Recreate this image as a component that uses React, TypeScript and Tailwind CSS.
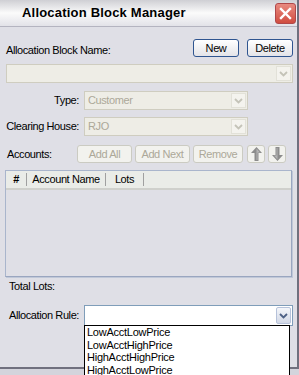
import React from "react"

const Chevron = ({ color }: { color: string }) => (
  <svg width="9" height="6" viewBox="0 0 9 6">
    <path d="M1 1l3.5 3.5L8 1" fill="none" stroke={color} strokeWidth="1.8" />
  </svg>
)

const DisabledCombo = ({ text, className }: { text?: string; className: string }) => (
  <div className={`flex h-[19px] border border-[#cfcdc0] bg-[#eeede6] ${className}`}>
    <div className="flex-1 pl-[3px] leading-[17px] text-[#aca899]">{text}</div>
    <div className="m-[1px] flex w-[15px] items-center justify-center border border-[#e2e1d8] bg-[#f4f3ee]">
      <Chevron color="#c4c3b8" />
    </div>
  </div>
)

const XpButton = ({ label, className }: { label: string; className: string }) => (
  <button className={`h-[18px] rounded-[3px] border border-[#2f5590] bg-gradient-to-b from-white to-[#e4e4e8] text-black ${className}`}>
    {label}
  </button>
)

const DisabledButton = ({ children, className }: { children: React.ReactNode; className: string }) => (
  <button className={`h-[18px] rounded-[3px] border border-[#cbcbc2] bg-[#f2f2ee] text-[#aca899] ${className}`}>
    {children}
  </button>
)

const Arrow = ({ down }: { down?: boolean }) => (
  <svg width="11" height="14" viewBox="0 0 11 14" className={down ? "rotate-180" : ""}>
    <path d="M5.5 0L11 6H7.5V14H3.5V6H0Z" fill="#8c8c8c" />
    <path d="M5.5 1.5L9 5.5H6.5V13H5.5Z" fill="#b4b4b4" />
  </svg>
)

const rules = ["LowAcctLowPrice", "LowAcctHighPrice", "HighAcctHighPrice", "HighAcctLowPrice"]

export default function App() {
  return (
    <div className="relative h-[375px] w-[299px] overflow-hidden whitespace-nowrap bg-[#d4d4dc] text-[11px] tracking-[-0.4px] text-black [font-family:'Liberation_Sans',Arial,sans-serif]">
      <div className="flex h-[369px] flex-col border-r-2 border-b-2 border-[#70707e] bg-[#dfdfe6]">
        {/* title bar */}
        <div className="flex h-[27px] items-center justify-between border-b border-[#b4b4c0] bg-gradient-to-b from-[#cfcfd4] via-[#fbfbfb] to-[#e2e2e8] pl-[22px] pr-[1px]">
          <span className="text-[13px] font-bold tracking-[0.2px]">Allocation Block Manager</span>
          <div className="flex h-[21px] w-[21px] items-center justify-center rounded-[3px] border border-[#b0484a] bg-gradient-to-b from-[#e88a80] to-[#d04c40]">
            <svg width="13" height="13" viewBox="0 0 13 13">
              <path d="M2 2L11 11M11 2L2 11" stroke="white" strokeWidth="2.4" strokeLinecap="square" />
            </svg>
          </div>
        </div>

        <div className="flex flex-col pl-[6px] pr-[4px]">
          {/* name row */}
          <div className="mt-[12px] flex items-end">
            <span className="flex-1 leading-[13px]">Allocation Block Name:</span>
            <XpButton label="New" className="w-[46px]" />
            <XpButton label="Delete" className="ml-[8px] w-[46px]" />
          </div>
          <DisabledCombo className="mt-[7px] w-[287px]" />

          <div className="mt-[8px] flex items-center">
            <span className="w-[73px] text-right">Type:</span>
            <DisabledCombo text="Customer" className="ml-[5px] w-[164px]" />
          </div>
          <div className="mt-[7px] flex items-center">
            <span className="w-[73px] text-right">Clearing House:</span>
            <DisabledCombo text="RJO" className="ml-[5px] w-[164px]" />
          </div>

          {/* accounts */}
          <div className="mt-[9px] flex items-center">
            <span className="w-[71px] pl-[1px]">Accounts:</span>
            <DisabledButton className="w-[55px]">Add All</DisabledButton>
            <DisabledButton className="ml-[3px] w-[55px]">Add Next</DisabledButton>
            <DisabledButton className="ml-[3px] w-[50px]">Remove</DisabledButton>
            <DisabledButton className="ml-[4px] flex w-[18px] items-center justify-center">
              <Arrow />
            </DisabledButton>
            <DisabledButton className="ml-[3px] flex w-[18px] items-center justify-center">
              <Arrow down />
            </DisabledButton>
          </div>

          {/* table */}
          <div className="-ml-[1px] mt-[7px] flex h-[107px] w-[287px] flex-col border border-[#a9b5cc] border-b-[#9aa6c0] border-r-[#9aa6c0] shadow-[1px_1px_0_#c0c8d8]">
            <div className="flex h-[19px] items-center border-b-2 border-[#cfd0cc] bg-[#eaece8]">
              <div className="flex h-[13px] w-[21px] items-center justify-center border-r border-[#a0a0a0] font-bold">#</div>
              <div className="flex h-[13px] w-[79px] items-center justify-center border-r border-[#a0a0a0]">Account Name</div>
              <div className="flex h-[13px] w-[38px] items-center justify-center border-r border-[#a0a0a0]">Lots</div>
            </div>
          </div>

          <div className="mt-[3px] pl-[3px] leading-[13px]">Total Lots:</div>

          <div className="mt-[12px] flex items-center">
            <span className="w-[78px] pl-[3px]">Allocation Rule:</span>
            <div className="flex h-[21px] w-[209px] border border-[#7f9db9] bg-white">
              <div className="flex-1" />
              <div className="m-[1px] flex w-[15px] items-center justify-center rounded-[2px] border border-[#b6c2da] bg-gradient-to-b from-[#f4f6fa] to-[#d2d8e6]">
                <Chevron color="#4d6185" />
              </div>
            </div>
          </div>
        </div>
      </div>

      {/* dropdown list */}
      <div className="absolute left-[84px] top-[325px] w-[206px] border border-black bg-white pl-[2px] text-[11px] leading-[12.5px] tracking-[-0.25px]">
        {rules.map((r) => (
          <div key={r}>{r}</div>
        ))}
      </div>
    </div>
  )
}
